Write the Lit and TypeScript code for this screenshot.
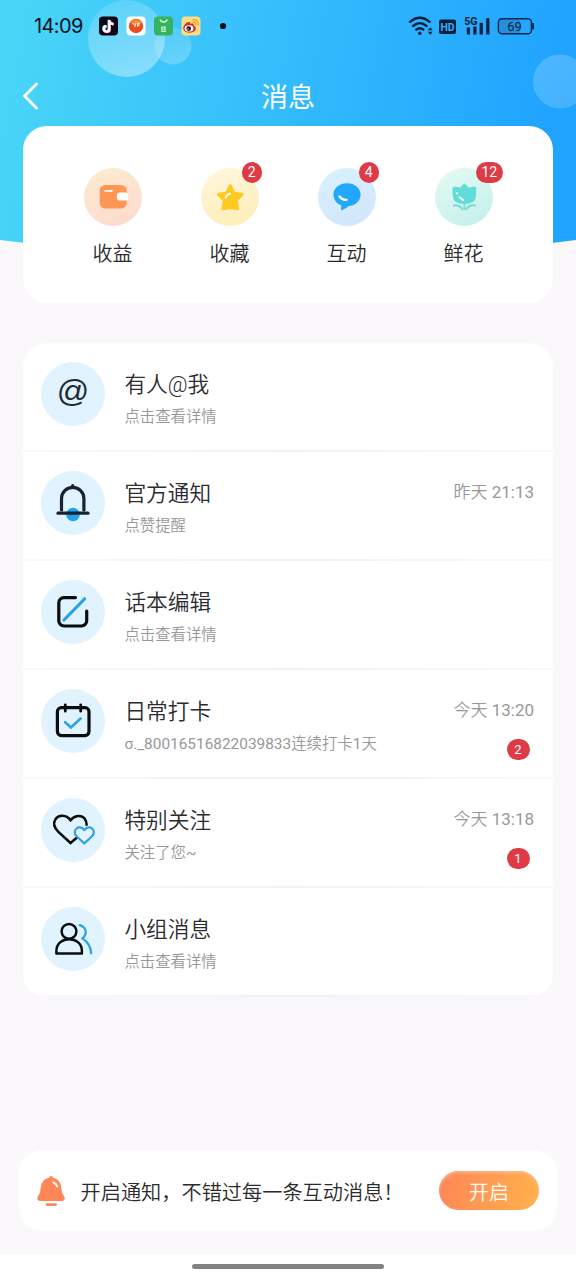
import { LitElement, html, css, svg, nothing } from "lit";
import { customElement, property } from "lit/decorators.js";

const tileIcons: Record<string, unknown> = {
  wallet: svg`
    <defs><linearGradient id="g" x1="0" y1="0" x2=".35" y2="1"><stop offset="0" stop-color="#fdecd0"/><stop offset="1" stop-color="#fddccf"/></linearGradient></defs>
    <circle cx="29" cy="29" r="29" fill="url(#g)"/>
    <rect x="15.7" y="17" width="27" height="23.5" rx="5.5" fill="#ff9656"/>
    <rect x="32.8" y="24.5" width="11.5" height="8" rx="3" fill="#fff"/>
    <path d="M21 22.8h7" stroke="#fff" stroke-width="1.8" stroke-linecap="round"/>`,
  star: svg`
    <defs><linearGradient id="g" x1="0" y1="0" x2=".35" y2="1"><stop offset="0" stop-color="#fff6df"/><stop offset="1" stop-color="#feefbd"/></linearGradient></defs>
    <circle cx="29" cy="29" r="29" fill="url(#g)"/>
    <path d="M29.300 18l3.500 7.300 8 1.200-5.900 5.900 1.500 8.300q-7.100-2.400-14.200 0l1.500-8.300-5.900-5.900 8-1.200z" fill="#ffc91f" stroke="#ffc91f" stroke-width="3.400" stroke-linejoin="round"/>
    <path d="M24.500 29.800q1-3 4.500-4.200" stroke="#fff" stroke-width="2" stroke-linecap="round" fill="none"/>`,
  chat: svg`
    <defs><linearGradient id="g" x1="0" y1="0" x2=".5" y2="1"><stop offset="0" stop-color="#d9f2fd"/><stop offset="1" stop-color="#d3e6fd"/></linearGradient></defs>
    <circle cx="29" cy="29" r="29" fill="url(#g)"/>
    <path d="M29 15.200c7.700 0 13.600 4.900 13.600 11.300 0 6.500-5.300 11.300-11.900 11.600-1.800 1.600-3.900 3-6.300 4-.9.400-1.500-.1-1.400-1l.3-3.700c-4.700-1.800-7.900-5.800-7.900-10.900 0-6.400 5.900-11.300 13.600-11.300z" fill="#21a7fb"/>
    <path d="M21.500 28.400q2.800 3.600 7 3.500" stroke="#fff" stroke-width="2.400" stroke-linecap="round" fill="none"/>`,
  flower: svg`
    <defs><linearGradient id="g" x1="0" y1="0" x2=".5" y2="1"><stop offset="0" stop-color="#e4fbf3"/><stop offset="1" stop-color="#c8f1ec"/></linearGradient></defs>
    <circle cx="29" cy="29" r="29" fill="url(#g)"/>
    <path d="M29.400 15.300l4.300 4.500q2.600-1.200 6.100-1.100 1.700.2 1.500 2-.2 4.300-.3 7.300-.6 8-11.600 8t-11.600-8q-.2-3-.4-7.300-.1-1.800 1.600-2 3.500-.1 6.100 1.100z" fill="#62dcd8"/>
    <path d="M29.400 35v7" stroke="#7adbd5" stroke-width="1.700"/>
    <path d="M18.600 37.500q5.800-1.100 8.800 3.800M40.200 37.500q-5.800-1.100-8.800 3.800" stroke="#7adbd5" stroke-width="2" stroke-linecap="round" fill="none"/>
    <path d="M24.500 29.200l3.700 2.900M21.800 25.200l.3.300" stroke="#fff" stroke-width="1.900" stroke-linecap="round"/>`,
};

const rowIcons: Record<string, unknown> = {
  at: svg`<text x="32" y="39.500" text-anchor="middle" class="at">@</text>`,
  bell: svg`
    <circle cx="32" cy="43.500" r="6.800" fill="#22a2ef"/>
    <path d="M20.500 39v-11.500a11.200 11.200 0 0 1 22.400 0V39M31.700 16.500V14.500" fill="none" stroke="#1b2130" stroke-width="3.200" stroke-linecap="round"/>
    <path d="M17 42.200h30" stroke="#1b2130" stroke-width="3.200" stroke-linecap="round"/>`,
  edit: svg`
    <path d="M34.500 17.600H23a5.200 5.200 0 0 0-5.200 5.200v18a5.200 5.200 0 0 0 5.200 5.200h17.500a5.200 5.200 0 0 0 5.200-5.200V31" fill="none" stroke="#0a0c10" stroke-width="3.200" stroke-linecap="round"/>
    <path d="M23 40L43.600 18.800" stroke="#2ba3e4" stroke-width="3.200" stroke-linecap="round"/>`,
  calendar: svg`
    <rect x="16.400" y="18.600" width="31.600" height="28" rx="4" fill="none" stroke="#0a0c10" stroke-width="3.200"/>
    <path d="M24.300 15.800v6.400M39.700 15.800v6.400" stroke="#0a0c10" stroke-width="2.800" stroke-linecap="round"/>
    <path d="M24.200 33.200l5.700 5.200 9.700-8.800" fill="none" stroke="#2ba3e4" stroke-width="2.700" stroke-linecap="round"/>`,
  hearts: svg`
    <path d="M37.500 38.300L29.500 45 17.400 33.800C13.400 29.800 12.100 25 14.400 21.300 17.800 16.300 25.300 16.800 29.500 22.200 33.500 17 40.500 16.600 43.600 20.500Q45.600 23.200 45.600 26.800" fill="none" stroke="#0a0c10" stroke-width="2.500" stroke-linecap="round"/>
    <path d="M43.300 45.500l-7.700-7.200c-5.400-5.600 2.600-13.200 7.700-6.200 5.100-7 13.100.6 7.700 6.200z" fill="#e3f4fe" stroke="#2ba3e4" stroke-width="2.200" stroke-linejoin="round"/>`,
  group: svg`
    <circle cx="28" cy="24.300" r="7.400" fill="none" stroke="#0a0c10" stroke-width="2.500"/>
    <path d="M15.400 46.600v-2.600c0-15.800 25.500-15.800 25.500 0v2.600z" fill="none" stroke="#0a0c10" stroke-width="2.500" stroke-linejoin="round"/>
    <path d="M38.800 18.200q5.800 2 6 7-.2 3.700-3.300 6.200 8.300 5.600 8.600 14.800" fill="none" stroke="#2ba3e4" stroke-width="2.300" stroke-linecap="round"/>`,
};

@customElement("status-bar")
class StatusBar extends LitElement {
  static styles = css`
    :host { display: flex; height: 50px; align-items: center; padding: 2px 41px 0 34px; color: #061426; box-sizing: border-box; }
    .time { font: 400 20px/24px Inter, sans-serif; color: #08111c; width: 65px; letter-spacing: -0.6px; white-space: nowrap; }
    svg { display: block; flex: none; }
    .space { flex: 1; }
    .hd { font: 700 10.500px Roboto, sans-serif; fill: #39b0fb; }
    .net { font: 700 10.500px Roboto, sans-serif; fill: #061d38; }
    .level { font: 400 13px Roboto, sans-serif; fill: #062344; }
  `;
  render() {
    return html`
      <span class="time">14:09</span>
      <svg width="130" height="20" viewBox="0 0 130 20">
        <rect x="0" y="0.500" width="19" height="19" rx="4" fill="#0b0714"/>
        <g fill="none" stroke-width="2.300">
          <path d="M10.300 4v8.700a2.700 2.700 0 1 1-2.800-2.600M10.300 4.300q.5 3.300 4.100 3.700" stroke="#46dedb" transform="translate(-.7 -.3)"/>
          <path d="M10.300 4v8.700a2.700 2.700 0 1 1-2.800-2.600M10.300 4.300q.5 3.300 4.100 3.700" stroke="#ee5b84" transform="translate(.6 .5)"/>
          <path d="M10.300 4v8.700a2.700 2.700 0 1 1-2.800-2.600M10.300 4.300q.5 3.300 4.100 3.700" stroke="#fff"/>
        </g>
        <rect x="27.500" y="0.500" width="19" height="19" rx="4" fill="#fff"/>
        <circle cx="37" cy="10" r="7.200" fill="#e94d1c"/>
        <path d="M31 6.500a7.200 7.200 0 0 1 12 0q-5 5-12 0z" fill="#f28a2c"/>
        <path d="M34 7.200l1.400 2M37 6.700l-1.400 4.300M38 7.800h3M39.500 6.600l-1 4M38 10l2.500-.4" stroke="#fff" stroke-width=".9"/>
        <rect x="55" y="0.500" width="19" height="19" rx="4" fill="#35b35f"/>
        <path d="M61 3.500a3.800 3.800 0 0 0 7.200 0" stroke="#d9ffd8" stroke-width="1.300" fill="none"/>
        <path d="M62 11.200h5M62 13.200h5M62 15.400h5M63 10.500v5.500M65.900 10.500v5.500" stroke="#c5f2cc" stroke-width="1"/>
        <rect x="82.500" y="0.500" width="19" height="19" rx="4" fill="#fbdd84"/>
        <path d="M84.300 12.300c.2-3.500 4.200-7.300 6.300-6.200q.9.600.5 1.900c2.200-.9 4-.5 3.500 1.400 5 2.700 1.200 7.300-4.400 7.300-3.200 0-6-1.700-5.900-4.400z" fill="#dc2a2c"/>
        <ellipse cx="90" cy="12.400" rx="4.400" ry="3.200" fill="#fff"/>
        <circle cx="89.700" cy="12.600" r="2.300" fill="#14100f"/><circle cx="89" cy="13" r=".7" fill="#fff"/>
        <path d="M94 3.600q5.500-.4 5.300 5.400M94.200 6q2.700-.1 2.600 2.700" stroke="#f59b28" stroke-width="1.300" fill="none" stroke-linecap="round"/>
        <circle cx="124" cy="10" r="3.100" fill="#08111c"/>
      </svg>
      <span class="space"></span>
      <svg width="127" height="20" viewBox="0 0 127 20">
        <g fill="none" stroke="#06203c" stroke-width="2.300" stroke-linecap="round">
          <path d="M2 5.800q9.800-8.200 19.600 0M5 10q6.800-5.700 13.600 0M8.300 13.500q3.500-2.600 7 0"/>
        </g>
        <circle cx="11.800" cy="17.300" r="1.700" fill="#06203c"/>
        <path d="M19.800 14.200l2.400-2.900 2.400 2.900zM19.800 15.800h4.800l-2.400 2.900z" fill="#06203c"/>
        <rect x="31" y="3.500" width="17" height="14.500" rx="2" fill="#06203c"/>
        <text x="39.500" y="14.600" text-anchor="middle" class="hd">HD</text>
        <text x="56.200" y="9" class="net">5G</text>
        <path d="M58.800 18.600h3.200v-7h-3.200zM65.300 18.600h3.200V10.500h-3.200zM71.600 18.600h3.200V6.800h-3.200zM78.200 18.600h3.200V2.300h-3.200z" fill="#06203c"/>
        <rect x="91.200" y="3.200" width="21" height="14.200" rx="3" fill="#258fdc"/>
        <rect x="90.400" y="2.700" width="33" height="15" rx="3.500" fill="none" stroke="#06284e" stroke-width="1.400"/>
        <path d="M124.300 7.800h1v5h-1z" stroke="#06284e" stroke-width="1.300"/>
        <text x="106.500" y="14.800" text-anchor="middle" class="level">69</text>
      </svg>`;
  }
}

@customElement("quick-tile")
class QuickTile extends LitElement {
  @property() icon = "";
  @property() label = "";
  @property() count = "";
  static styles = css`
    :host { display: flex; flex-direction: column; align-items: center; width: 117px; }
    .pic { position: relative; width: 58px; height: 58px; }
    svg { display: block; }
    .label { margin-top: 15px; font-size: 20px; line-height: 26px; color: #2b2b2d; }
    .badge { position: absolute; left: 41px; top: -6px; min-width: 20.500px; height: 20.500px; padding: 0 6px; box-sizing: border-box; border-radius: 11px; background: #de3b46; color: #fff; font-size: 14px; font-weight: 400; line-height: 21px; text-align: center; }
  `;
  render() {
    return html`
      <div class="pic">
        <svg width="58" height="58" viewBox="0 0 58 58">${tileIcons[this.icon]}</svg>
        ${this.count ? html`<span class="badge">${this.count}</span>` : nothing}
      </div>
      <span class="label">${this.label}</span>`;
  }
}

@customElement("message-row")
class MessageRow extends LitElement {
  @property() icon = "";
  @property() heading = "";
  @property() note = "";
  @property() time = "";
  @property() count = "";
  static styles = css`
    :host { display: flex; height: 109px; box-sizing: border-box; padding: 18.500px 19px 0 18.400px; background: linear-gradient(90deg, #f9f8fa, #f1f0f2 50%, #f9f8fa) 0 100% / 100% 2px no-repeat; }
    svg { display: block; flex: none; margin-right: 19px; }
    .at { font: 400 32px "Liberation Sans", sans-serif; fill: #232a34; }
    .body { flex: 1; padding-top: 8.500px; }
    .heading { font-size: 21.700px; line-height: 30px; color: #2b2b30; }
    .note { margin-top: 6px; font-size: 15.400px; line-height: 22px; color: #98989a; }
    .latin { font-weight: 400; }
    .side { display: flex; flex-direction: column; align-items: flex-end; padding-top: 9.500px; font-weight: 400; }
    .time { font-size: 17px; line-height: 24px; color: #98989a; font-weight: 350; }
    .badge { margin: 17px 4.500px 0 0; width: 23px; height: 20.500px; border-radius: 11.500px; background: #de3b46; color: #fff; font-size: 13px; line-height: 21px; text-align: center; }
  `;

  /* Latin runs and digits are set one step heavier than the Chinese around them. */
  private mixed(text: string) {
    return text
      .split(/([\x21-\x7eσ]+)/)
      .filter((part) => part)
      .map((part) => (/^[\x21-\x7eσ]/.test(part) ? html`<span class="latin">${part}</span>` : part));
  }

  render() {
    return html`
      <svg width="64" height="64" viewBox="0 0 64 64"><circle cx="32" cy="32" r="32" fill="#e0f3ff"/>${rowIcons[this.icon]}</svg>
      <div class="body">
        <div class="heading">${this.heading}</div>
        <div class="note">${this.mixed(this.note)}</div>
      </div>
      <div class="side">
        ${this.time ? html`<span class="time">${this.mixed(this.time)}</span>` : nothing}
        ${this.count ? html`<span class="badge">${this.count}</span>` : nothing}
      </div>`;
  }
}

const tiles = [
  { icon: "wallet", label: "收益", count: "" },
  { icon: "star", label: "收藏", count: "2" },
  { icon: "chat", label: "互动", count: "4" },
  { icon: "flower", label: "鲜花", count: "12" },
];

const messages = [
  { icon: "at", heading: "有人@我", note: "点击查看详情", time: "", count: "" },
  { icon: "bell", heading: "官方通知", note: "点赞提醒", time: "昨天 21:13", count: "" },
  { icon: "edit", heading: "话本编辑", note: "点击查看详情", time: "", count: "" },
  { icon: "calendar", heading: "日常打卡", note: "σ._80016516822039833连续打卡1天", time: "今天 13:20", count: "2" },
  { icon: "hearts", heading: "特别关注", note: "关注了您~", time: "今天 13:18", count: "1" },
  { icon: "group", heading: "小组消息", note: "点击查看详情", time: "", count: "" },
];

@customElement("app-root")
class AppRoot extends LitElement {
  static styles = css`
    :host { display: flex; flex-direction: column; position: relative; isolation: isolate; width: 576px; height: 1280px; overflow: hidden; background: #faf8fa; font-family: Roboto, "Noto Sans CJK SC", sans-serif; font-weight: 350; }
    .backdrop { position: absolute; left: 0; top: 0; z-index: -1; display: block; }
    .titlebar { display: grid; grid-template-columns: 60px 1fr 60px; align-items: center; height: 76px; padding-top: 16px; box-sizing: border-box; }
    .back { display: block; margin-left: 22px; }
    .title { padding-top: 4px; font-size: 27px; line-height: 36px; font-weight: 400; color: #fff; text-align: center; }
    .tiles { display: flex; margin: 0 23px; height: 176.500px; box-sizing: border-box; padding: 42px 31px 0 31px; background: #fff; border-radius: 24px; }
    .list { margin: 40.500px 23px 0; background: #fff; border-radius: 24px; overflow: hidden; height: 654px; }
    .space { flex: 1; }
    .prompt { display: flex; align-items: center; height: 81px; margin: 0 19px 23px; padding: 0 18px; background: #fff; border-radius: 23px; }
    .ask { flex: 1; margin-left: 15.500px; padding-top: 5px; font-size: 20.200px; line-height: 28px; color: #2b2b2d; white-space: nowrap; }
    .open { width: 100px; height: 39px; padding: 1px 0 0; border: 0; border-radius: 20px; background: linear-gradient(100deg, #ff8658, #ffb24b); box-shadow: inset 0 2px 3px rgba(255, 190, 160, 0.7); color: #fff; font: inherit; font-size: 20px; }
    .home { display: flex; justify-content: center; height: 26px; padding-top: 10px; box-sizing: border-box; background: #fff; }
    .handle { width: 192px; height: 5px; border-radius: 3px; background: #838383; }
  `;
  render() {
    return html`
      <svg class="backdrop" width="576" height="270" viewBox="0 0 576 270">
        <defs>
          <linearGradient id="sky" gradientUnits="userSpaceOnUse" x1="0" y1="100" x2="530" y2="200"><stop offset="0" stop-color="#49d5f7"/><stop offset=".5" stop-color="#34bcfc"/><stop offset="1" stop-color="#20a4ff"/></linearGradient>
          <linearGradient id="orb" x1=".2" y1="0" x2=".6" y2="1"><stop offset="0" stop-color="#fff" stop-opacity=".12"/><stop offset="1" stop-color="#fff" stop-opacity=".38"/></linearGradient>
          <linearGradient id="dim" x1="0" y1="0" x2=".5" y2="1"><stop offset="0" stop-color="#fff" stop-opacity=".08"/><stop offset="1" stop-color="#fff" stop-opacity=".22"/></linearGradient>
          <linearGradient id="far" x1=".2" y1="0" x2=".6" y2="1"><stop offset="0" stop-color="#fff" stop-opacity=".2"/><stop offset="1" stop-color="#fff" stop-opacity=".16"/></linearGradient>
        </defs>
        <path d="M0 0H576V240Q288 278 0 240Z" fill="url(#sky)"/>
        <circle cx="173" cy="46" r="18.500" fill="url(#dim)"/>
        <circle cx="126.500" cy="38.500" r="38.500" fill="url(#orb)"/>
        <circle cx="560" cy="81.500" r="27" fill="url(#far)"/>
      </svg>
      <status-bar></status-bar>
      <div class="titlebar">
        <svg class="back" width="18" height="28" viewBox="0 0 18 28"><path d="M14.500 2L2.600 14l11.900 12" fill="none" stroke="#fff" stroke-width="2.900" stroke-linecap="round" stroke-linejoin="round"/></svg>
        <span class="title">消息</span>
      </div>
      <section class="tiles">
        ${tiles.map((t) => html`<quick-tile icon=${t.icon} label=${t.label} count=${t.count}></quick-tile>`)}
      </section>
      <section class="list">
        ${messages.map((m) => html`<message-row icon=${m.icon} heading=${m.heading} note=${m.note} time=${m.time} count=${m.count}></message-row>`)}
      </section>
      <span class="space"></span>
      <section class="prompt">
        <svg width="28" height="32" viewBox="0 0 28 32">
          <path d="M14 1q1.700 0 1.900 1.700Q24 4.500 24.300 13q.1 5.300 3 8.800 1.700 3.700-2.300 4.200H3Q-1 25.500.700 21.800 3.600 18.300 3.700 13 4 4.500 12.100 2.700 12.300 1 14 1z" fill="#ff8657"/>
          <path d="M10 29.600h8.500" stroke="#ff8657" stroke-width="2.900" stroke-linecap="round"/>
          <path d="M16.300 7.500q3 1 3.900 4" stroke="#fff" stroke-width="2.100" stroke-linecap="round" fill="none"/>
        </svg>
        <span class="ask">开启通知，不错过每一条互动消息！</span>
        <button class="open">开启</button>
      </section>
      <div class="home"><div class="handle"></div></div>`;
  }
}
